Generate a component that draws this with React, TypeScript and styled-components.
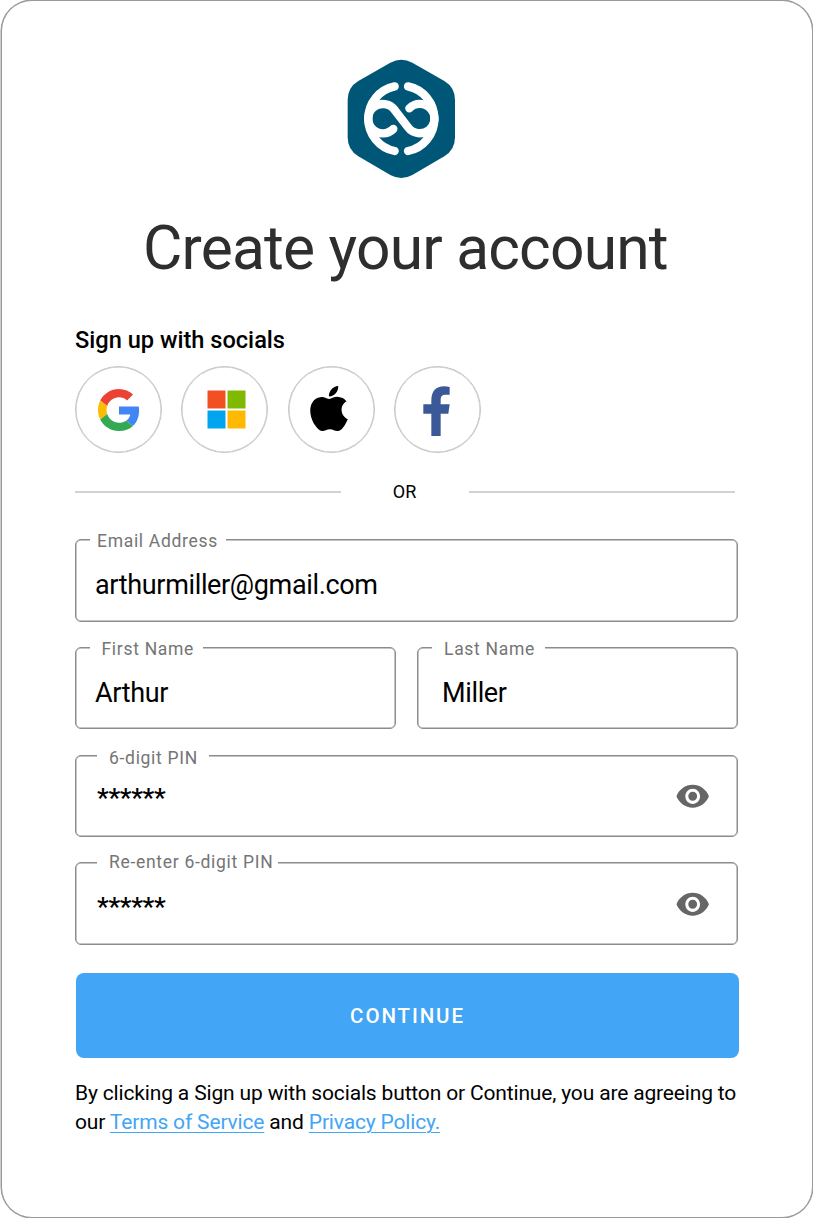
import React from "react";
import styled, { createGlobalStyle } from "styled-components";

const GlobalStyle = createGlobalStyle`
  *, *::before, *::after { box-sizing: border-box; }
  body {
    margin: 0;
    background: #fff;
    font-family: Roboto, "Liberation Sans", sans-serif;
    color: #000;
  }
`;

const Card = styled.main`
  width: 812px;
  height: 1218px;
  margin-left: 1px;
  padding: 49px 73px 0 73px;
  border: 1px solid #999;
  border-radius: 31px;
  box-shadow: 0 0 0 0.5px #999;
  display: flex;
  flex-direction: column;
  background: #fff;
`;

const LogoMark = styled.svg`
  display: block;
  width: 130px;
  height: 140px;
  margin-left: 261px;
`;

const Title = styled.h1`
  margin: 23px 0 0 68px;
  height: 72px;
  font-size: 60.5px;
  line-height: 72px;
  font-weight: 400;
  letter-spacing: -0.8px;
  color: #2e2e2e;
  white-space: nowrap;
`;

const SocialHeading = styled.h2`
  margin: 41px 0 0;
  height: 28px;
  font-size: 23.6px;
  line-height: 29px;
  font-weight: 500;
  white-space: nowrap;
`;

const SocialRow = styled.div`
  display: flex;
  gap: 19.3px;
  margin-top: 12px;
`;

const SocialButton = styled.button`
  display: flex;
  align-items: center;
  justify-content: center;
  width: 87px;
  height: 87px;
  padding: 0;
  border: 1px solid #c4c4c4;
  box-shadow: inset 0 0 0 0.5px #c4c4c4;
  border-radius: 50%;
  background: #fff;
`;

const Divider = styled.div`
  display: flex;
  align-items: center;
  width: 660px;
  height: 24px;
  margin-top: 27px;
`;

const Rule = styled.span`
  flex: 0 0 266px;
  height: 2px;
  background: #d2d2d2;
`;

const Or = styled.span`
  flex: 1;
  padding-right: 1px;
  text-align: center;
  font-size: 18px;
  line-height: 24px;
`;

const Form = styled.form`
  display: flex;
  flex-direction: column;
  gap: 25.3px;
  width: 663px;
  margin-top: 35px;
`;

const NameRow = styled.div`
  display: flex;
  gap: 21px;
`;

const Field = styled.div`
  position: relative;
  flex: 1;
  display: flex;
  align-items: center;
  justify-content: space-between;
  height: 82.5px;
  min-height: 82.5px;
  padding: 7px 27px 0 19px;
  border: 1px solid #8c8c8c;
  border-radius: 6px;
  box-shadow: inset 0 0 0 0.5px #8c8c8c;
`;

const Label = styled.label<{ $start: number; $width: number; $indent: number; $top?: number }>`
  position: absolute;
  left: ${(p) => p.$start}px;
  top: ${(p) => p.$top ?? -10}px;
  width: ${(p) => p.$width}px;
  padding-left: ${(p) => p.$indent}px;
  height: 22px;
  background: #fff;
  color: #757575;
  font-size: 17.5px;
  line-height: 22px;
  letter-spacing: 0.7px;
  white-space: nowrap;
`;

const Value = styled.span<{ $indent?: number }>`
  margin: 2px 0 0 ${(p) => p.$indent ?? 0}px;
  font-size: 27px;
  line-height: 32px;
  letter-spacing: -0.35px;
  white-space: nowrap;
`;

const Pin = styled.span<{ $shift: number }>`
  margin: ${(p) => p.$shift}px 0 0 2px;
  font-size: 26.5px;
  line-height: 32px;
  font-weight: 500;
  letter-spacing: -0.35px;
`;

const EyeButton = styled.button`
  display: flex;
  margin: -6px 0 0;
  padding: 0;
  border: 0;
  background: none;
`;

const Submit = styled.button`
  width: 663px;
  height: 85.5px;
  margin: 28px 0 0 1px;
  padding-top: 2px;
  border: 0;
  border-radius: 8px;
  background: #42a5f5;
  color: #fff;
  font-family: inherit;
  font-size: 20.5px;
  font-weight: 500;
  letter-spacing: 1.9px;
`;

const Legal = styled.p`
  margin: 20.5px 0 0;
  font-size: 21px;
  line-height: 29.5px;
  letter-spacing: -0.16px;
  white-space: nowrap;
`;

const Link = styled.a`
  color: #42a5f5;
  text-decoration: underline;
  text-decoration-thickness: 1px;
  text-underline-offset: 3px;
`;

const Logo = () => (
  <LogoMark viewBox="0 0 390 420">
    <path
      fill="#005677"
      d="M163 38Q196 20 229 38L325 93Q357 112 357 150V262Q357 300 325 319L229 375Q196 393 163 375L67 319Q35 300 35 262V150Q35 112 67 93Z"
    />
    <g fill="none" stroke="#fff" strokeWidth="25" strokeLinecap="round">
      <path d="M176 109A99 99 0 0 0 176 303" />
      <path d="M216 109A99 99 0 0 1 216 303" />
      <path d="M172 237A44 44 0 1 1 176 180L216 232A44 44 0 1 0 220 175" />
    </g>
  </LogoMark>
);

const GoogleIcon = () => (
  <svg width="42" height="42" viewBox="0 0 48 48">
    <path fill="#EA4335" d="M24 9.5c3.54 0 6.71 1.22 9.21 3.6l6.85-6.85C35.9 2.38 30.47 0 24 0 14.62 0 6.51 5.38 2.56 13.22l7.98 6.19C12.43 13.72 17.74 9.5 24 9.5z" />
    <path fill="#4285F4" d="M46.98 24.55c0-1.57-.15-3.09-.38-4.55H24v9.02h12.94c-.58 2.96-2.26 5.48-4.78 7.18l7.73 6c4.51-4.18 7.09-10.36 7.09-17.65z" />
    <path fill="#FBBC05" d="M10.53 28.59c-.48-1.45-.76-2.99-.76-4.59s.27-3.14.76-4.59l-7.98-6.19C.92 16.46 0 20.12 0 24c0 3.88.92 7.54 2.56 10.78l7.97-6.19z" />
    <path fill="#34A853" d="M24 48c6.48 0 11.93-2.13 15.89-5.81l-7.73-6c-2.15 1.45-4.92 2.3-8.16 2.3-6.26 0-11.57-4.22-13.47-9.91l-7.98 6.19C6.51 42.62 14.62 48 24 48z" />
  </svg>
);

const MicrosoftSquares = styled.svg`
  display: block;
  width: 39px;
  height: 39px;
  margin: 0 0 0 3px;
`;

const MicrosoftIcon = () => (
  <MicrosoftSquares viewBox="0 0 39 39">
    <path fill="#F25022" d="M.5.5h18v18H.5z" />
    <path fill="#7FBA00" d="M20.5.5h18v18h-18z" />
    <path fill="#00A4EF" d="M.5 20.5h18v18H.5z" />
    <path fill="#FFB900" d="M20.5 20.5h18v18h-18z" />
  </MicrosoftSquares>
);

const AppleShape = styled.svg`
  display: block;
  width: 46px;
  height: 45px;
  margin: -3px 0 0 -4px;
`;

const AppleIcon = () => (
  <AppleShape viewBox="0 0 24 24" preserveAspectRatio="none">
    <path d="M12.152 6.896c-.948 0-2.415-1.078-3.96-1.04-2.04.027-3.91 1.183-4.961 3.014-2.117 3.675-.546 9.103 1.519 12.09 1.013 1.454 2.208 3.09 3.792 3.039 1.52-.065 2.09-.987 3.935-.987 1.831 0 2.35.987 3.96.948 1.637-.026 2.676-1.48 3.676-2.948 1.156-1.688 1.636-3.325 1.662-3.415-.039-.013-3.182-1.221-3.22-4.857-.026-3.04 2.48-4.494 2.597-4.559-1.429-2.09-3.623-2.324-4.39-2.376-2-.156-3.675 1.09-4.61 1.09zM15.53 3.83c.843-1.012 1.4-2.427 1.245-3.83-1.207.052-2.662.805-3.532 1.818-.78.896-1.454 2.338-1.273 3.714 1.338.104 2.715-.688 3.559-1.701" />
  </AppleShape>
);

const FacebookShape = styled.svg`
  display: block;
  width: 27px;
  height: 50px;
  margin: 2px 1px 0 0;
`;

const FacebookIcon = () => (
  <FacebookShape viewBox="0 0 81 150">
    <path fill="#3B5998" d="M25 150V83H1V55H25V43C25 15 39 1 63 1Q72 1 80 3V26H67C57 26 53 31 53 40V55H80L76 83H53V150Z" />
  </FacebookShape>
);

const EyeIcon = () => (
  <svg width="35.4" height="36.6" viewBox="0 0 24 24" preserveAspectRatio="none">
    <path
      fill="#666"
      d="M12 4.5C7 4.5 2.73 7.61 1 12c1.73 4.39 6 7.5 11 7.5s9.27-3.11 11-7.5c-1.73-4.39-6-7.5-11-7.5zM12 17c-2.76 0-5-2.24-5-5s2.24-5 5-5 5 2.24 5 5-2.24 5-5 5zm0-8c-1.66 0-3 1.34-3 3s1.34 3 3 3 3-1.34 3-3-1.34-3-3-3z"
    />
  </svg>
);

export default function App() {
  return (
    <>
      <GlobalStyle />
      <Card>
        <Logo />
        <Title>Create your account</Title>
        <SocialHeading>Sign up with socials</SocialHeading>
        <SocialRow>
          <SocialButton aria-label="Google"><GoogleIcon /></SocialButton>
          <SocialButton aria-label="Microsoft"><MicrosoftIcon /></SocialButton>
          <SocialButton aria-label="Apple"><AppleIcon /></SocialButton>
          <SocialButton aria-label="Facebook"><FacebookIcon /></SocialButton>
        </SocialRow>
        <Divider>
          <Rule />
          <Or>OR</Or>
          <Rule />
        </Divider>
        <Form>
          <Field>
            <Label $start={14} $width={136} $indent={7}>Email Address</Label>
            <Value>arthurmiller@gmail.com</Value>
          </Field>
          <NameRow>
            <Field>
              <Label $start={14} $width={113} $indent={11.5}>First Name</Label>
              <Value>Arthur</Value>
            </Field>
            <Field>
              <Label $start={14} $width={113} $indent={12}>Last Name</Label>
              <Value $indent={5}>Miller</Value>
            </Field>
          </NameRow>
          <Field>
            <Label $start={21} $width={112} $indent={12} $top={-9}>6-digit PIN</Label>
            <Pin $shift={-5}>******</Pin>
            <EyeButton type="button" aria-label="Show PIN"><EyeIcon /></EyeButton>
          </Field>
          <Field>
            <Label $start={21} $width={181} $indent={12} $top={-12}>Re-enter 6-digit PIN</Label>
            <Pin $shift={-3}>******</Pin>
            <EyeButton type="button" aria-label="Show PIN"><EyeIcon /></EyeButton>
          </Field>
        </Form>
        <Submit>CONTINUE</Submit>
        <Legal>
          By clicking a Sign up with socials button or Continue, you are agreeing to
          <br />
          our <Link>Terms of Service</Link> and <Link>Privacy Policy.</Link>
        </Legal>
      </Card>
    </>
  );
}
